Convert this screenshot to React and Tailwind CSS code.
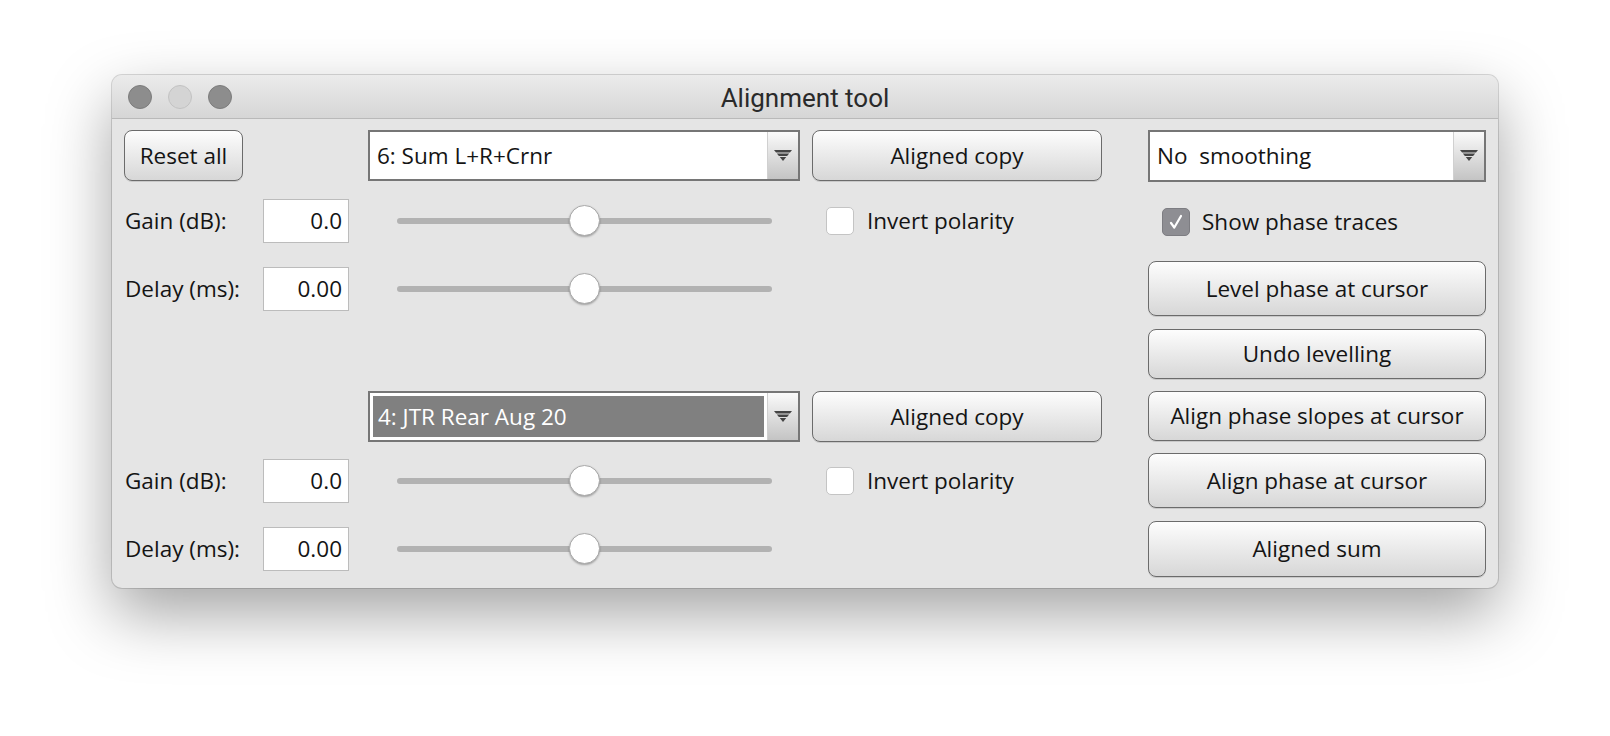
import React from 'react';

const btn =
  'flex items-center justify-center rounded-[8px] border-[1.5px] border-[#6b6b6b] bg-linear-to-b from-[#fdfdfd] to-[#d7d7d7] text-[22.5px] text-[#141414] shadow-[0_1px_0_rgba(0,0,0,0.12)]';

const ComboArrow = () => (
  <div className="flex h-full w-[31px] items-center justify-center border-l border-[#d0d0d0] bg-linear-to-b from-[#fafafa] to-[#c4c4c4]">
    <svg width="18" height="12" viewBox="0 0 18 12">
      <polygon points="0,0 18,0 15.95,2.5 2.05,2.5" fill="#444" />
      <polygon points="2.86,3.6 15.14,3.6 13.1,6 4.9,6" fill="#444" />
      <polygon points="5.73,7.1 12.27,7.1 9,11" fill="#444" />
    </svg>
  </div>
);

const Combo = ({ label, selected, className = '' }) => (
  <div className={`flex border-2 border-[#767676] bg-white ${className}`}>
    {selected ? (
      <div className="flex flex-1 p-[3px]">
        <div className="flex flex-1 items-center bg-[#808080] pl-[5px] text-[22.5px] text-white whitespace-pre">
          {label}
        </div>
      </div>
    ) : (
      <div className="flex flex-1 items-center pl-[7px] text-[22.5px] text-[#141414] whitespace-pre">{label}</div>
    )}
    <ComboArrow />
  </div>
);

const Slider = () => (
  <div className="relative ml-[48px] flex h-[44px] w-[375px] items-center">
    <div className="h-[6px] w-full rounded-full bg-[#b2b2b2]" />
    <div className="absolute left-[172px] top-[6px] h-[31px] w-[31px] rounded-full border border-[#a9a9a9] bg-white shadow-[0_1px_2px_rgba(0,0,0,0.3)]" />
  </div>
);

const Checkbox = ({ checked }) =>
  checked ? (
    <div className="flex h-[28px] w-[28px] items-center justify-center rounded-[5px] border border-[#7d7d82] bg-[#8e8e93]">
      <svg width="18" height="18" viewBox="0 0 18 18">
        <path d="M4 10 L7.3 14.5 L14 3" fill="none" stroke="white" strokeWidth="2.2" strokeLinecap="round" strokeLinejoin="round" />
      </svg>
    </div>
  ) : (
    <div className="h-[28px] w-[28px] rounded-[5px] border border-[#c4c4c4] bg-white" />
  );

const ValueRow = ({ label, value, invert, className = '' }) => (
  <div className={`flex h-[44px] items-center ${className}`}>
    <div className="w-[139px] pl-[1px] text-[22.5px] text-[#141414]">{label}</div>
    <div className="flex h-[44px] w-[86px] items-center justify-end border border-[#bcbcbc] bg-white pr-[6px] text-[22.5px] text-[#141414]">
      {value}
    </div>
    <Slider />
    {invert && (
      <div className="ml-[54px] flex items-center gap-[13px]">
        <Checkbox />
        <span className="text-[22.5px] text-[#141414]">Invert polarity</span>
      </div>
    )}
  </div>
);

const App = () => {
  return (
    <div className="h-[736px] w-[1610px] bg-white pl-[112px] pt-[75px] font-['Open_Sans',sans-serif]">
      <div className="flex h-[513px] w-[1386px] flex-col overflow-hidden rounded-[10px] bg-[#e5e5e5] shadow-[0_26px_64px_rgba(0,0,0,0.36),0_0_0_1px_rgba(0,0,0,0.14)]">
        {/* title bar */}
        <div className="relative flex h-[44px] items-center border-b border-[#b9b9b9] bg-linear-to-b from-[#ebebeb] to-[#d6d6d6]">
          <div className="ml-[16px] flex gap-[16px]">
            <div className="h-[24px] w-[24px] rounded-full border border-[#7c7c7c] bg-[#8d8d8d]" />
            <div className="h-[24px] w-[24px] rounded-full border border-[#c2c2c2] bg-[#d4d4d4]" />
            <div className="h-[24px] w-[24px] rounded-full border border-[#7c7c7c] bg-[#8d8d8d]" />
          </div>
          <div className="absolute inset-0 flex items-center justify-center pt-[4px] font-['Roboto',sans-serif] text-[26px] text-[#2a2a2a]">
            Alignment tool
          </div>
        </div>

        <div className="flex px-[12px] pt-[11px]">
          {/* left area */}
          <div className="flex w-[978px] flex-col">
            <div className="flex h-[51px]">
              <button className={`${btn} w-[119px]`}>Reset all</button>
              <Combo label="6: Sum L+R+Crnr" className="ml-[125px] w-[432px]" />
              <button className={`${btn} ml-[12px] w-[290px]`}>Aligned copy</button>
            </div>
            <ValueRow label="Gain (dB):" value="0.0" invert className="mt-[18px]" />
            <ValueRow label="Delay (ms):" value="0.00" className="mt-[24px]" />

            <div className="mt-[80px] flex h-[51px]">
              <Combo label="4: JTR Rear Aug 20" selected className="ml-[244px] w-[432px]" />
              <button className={`${btn} ml-[12px] w-[290px]`}>Aligned copy</button>
            </div>
            <ValueRow label="Gain (dB):" value="0.0" invert className="mt-[17px]" />
            <ValueRow label="Delay (ms):" value="0.00" className="mt-[24px]" />
          </div>

          {/* right column */}
          <div className="ml-[46px] flex w-[338px] flex-col">
            <Combo label="No  smoothing" className="h-[52px]" />
            <div className="ml-[14px] mt-[26px] flex h-[28px] items-center gap-[12px]">
              <Checkbox checked />
              <span className="text-[22.5px] text-[#141414]">Show phase traces</span>
            </div>
            <button className={`${btn} mt-[25px] h-[55px]`}>Level phase at cursor</button>
            <button className={`${btn} mt-[13px] h-[50px]`}>Undo levelling</button>
            <button className={`${btn} mt-[12px] h-[50px]`}>Align phase slopes at cursor</button>
            <button className={`${btn} mt-[12px] h-[55px]`}>Align phase at cursor</button>
            <button className={`${btn} mt-[13px] h-[56px]`}>Aligned sum</button>
          </div>
        </div>
      </div>
    </div>
  );
};

export default App;
